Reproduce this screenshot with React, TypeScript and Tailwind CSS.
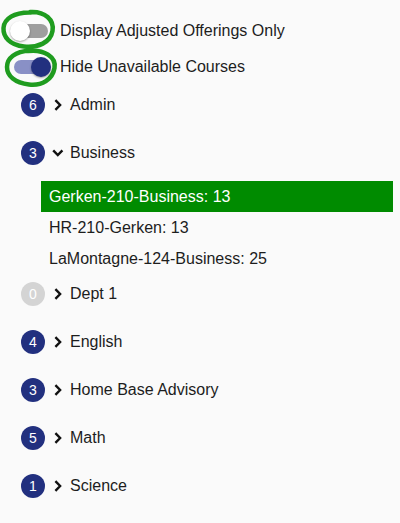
import React from "react";

type Dept = { name: string; count: number; open?: boolean; courses?: { label: string; active?: boolean }[] };

const depts: Dept[] = [
  { name: "Admin", count: 6 },
  {
    name: "Business",
    count: 3,
    open: true,
    courses: [
      { label: "Gerken-210-Business: 13", active: true },
      { label: "HR-210-Gerken: 13" },
      { label: "LaMontagne-124-Business: 25" },
    ],
  },
  { name: "Dept 1", count: 0 },
  { name: "English", count: 4 },
  { name: "Home Base Advisory", count: 3 },
  { name: "Math", count: 5 },
  { name: "Science", count: 1 },
];

function Switch({ on }: { on: boolean }) {
  return (
    <div className="relative h-full w-[60px] shrink-0">
      <div
        className={
          on
            ? "absolute left-[14px] top-[11px] h-[14px] w-[34px] rounded-full bg-[#8990c6]"
            : "absolute left-[14px] top-[11px] h-[14px] w-[34px] rounded-full bg-[#9e9e9e]"
        }
      />
      <div
        className={
          on
            ? "absolute left-[31px] top-[8px] h-[20px] w-[20px] rounded-full bg-[#22307f] shadow-[0_1px_2px_rgba(0,0,0,0.35)]"
            : "absolute left-[10px] top-[8px] h-[20px] w-[20px] rounded-full bg-white shadow-[0_1px_2px_rgba(0,0,0,0.35)]"
        }
      />
    </div>
  );
}

function Chevron({ open }: { open?: boolean }) {
  return (
    <svg width="16" height="16" viewBox="0 0 16 16" className="ml-[5px] block shrink-0">
      {open ? (
        <polyline points="3.2,5.3 7.8,10 12.4,5.3" fill="none" stroke="#111" strokeWidth="2.4" />
      ) : (
        <polyline points="5.4,3.2 10.1,8 5.4,12.8" fill="none" stroke="#111" strokeWidth="2.4" />
      )}
    </svg>
  );
}

export default function App() {
  return (
    <div className="relative min-h-[523px] w-[400px] bg-[#fafafa] pt-[13px] font-['Liberation_Sans',Arial,sans-serif] text-[16px] text-[#1d1d1d]">
      {/* green marker circles drawn around the two switches */}
      <svg className="pointer-events-none absolute left-0 top-0" width="70" height="95" viewBox="0 0 70 95">
        <path
          d="M30 12 C45 11, 54.5 20, 52.5 31 C50.5 42.5, 38 48, 24 46.5 C10 45, 3 37, 3.5 28 C4 19, 14 12, 31 12.5"
          fill="none"
          stroke="#1f9c1f"
          strokeWidth="4.5"
          strokeLinecap="round"
        />
        <path
          d="M28 51 C44 49, 56.5 57, 54.5 68 C52.5 79.5, 42 86, 29 84.5 C15 83, 7 76, 7 67 C7 58, 15 51.5, 30 50.5"
          fill="none"
          stroke="#1f9c1f"
          strokeWidth="4.5"
          strokeLinecap="round"
        />
      </svg>

      <div className="flex h-9 items-center">
        <Switch on={false} />
        <span>Display Adjusted Offerings Only</span>
      </div>
      <div className="flex h-9 items-center">
        <Switch on={true} />
        <span>Hide Unavailable Courses</span>
      </div>

      <div className="-mt-1">
        {depts.map((d) => (
          <div key={d.name}>
            <div className="flex h-12 items-center">
              <div
                className={
                  d.count === 0
                    ? "ml-[21px] flex h-6 w-6 shrink-0 items-center justify-center rounded-full bg-[#d4d4d4] text-[14px] text-white"
                    : "ml-[21px] flex h-6 w-6 shrink-0 items-center justify-center rounded-full bg-[#22307f] text-[14px] text-white"
                }
              >
                {d.count}
              </div>
              <Chevron open={d.open} />
              <span className="ml-[4px]">{d.name}</span>
            </div>
            {d.open && d.courses && (
              <div className="mt-[4px] -mb-[4px]">
                {d.courses.map((c) =>
                  c.active ? (
                    <div key={c.label} className="ml-[41px] flex h-[31px] w-[352px] items-center bg-[#008b00] pl-2 text-white">
                      {c.label}
                    </div>
                  ) : (
                    <div key={c.label} className="flex h-[31px] items-center pl-[49px]">
                      {c.label}
                    </div>
                  )
                )}
              </div>
            )}
          </div>
        ))}
      </div>
    </div>
  );
}
